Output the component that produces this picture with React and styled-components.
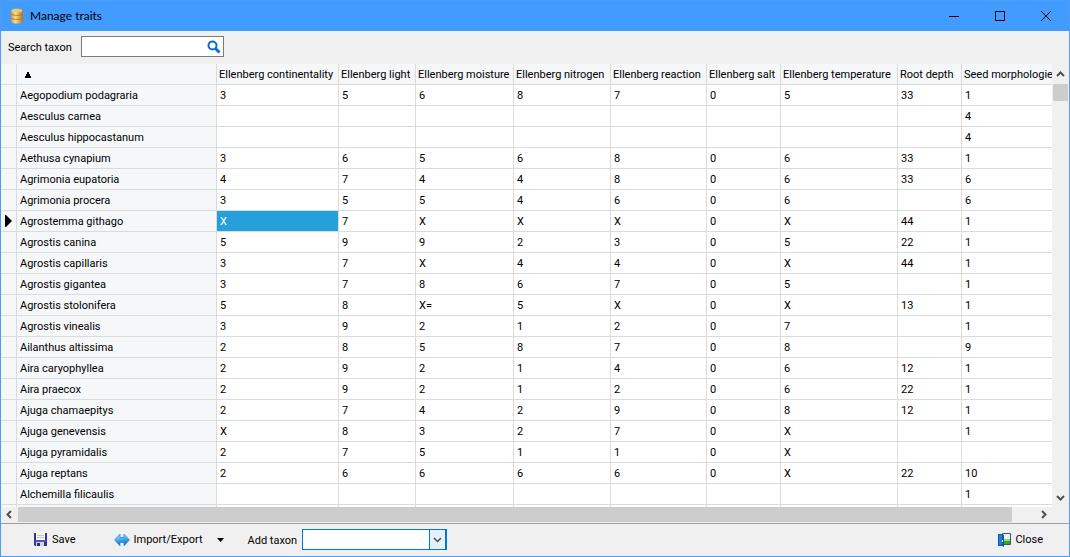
import styled, { createGlobalStyle } from "styled-components";

const GlobalStyle = createGlobalStyle`
  * {
    box-sizing: border-box;
  }

  body {
    margin: 0;
    background: #f0f0f0;
    color: #000;
    font: 11px/14px Roboto, "Liberation Sans", sans-serif;
  }

  button,
  input,
  select {
    font: inherit;
    color: inherit;
  }
`;

const Window = styled.div`
  display: flex;
  flex-direction: column;
  min-height: 100vh;
  border: 1px solid #4a9df8;
  border-top: 0;
`;

const TitleBar = styled.header`
  display: flex;
  align-items: center;
  height: 31px;
  padding-left: 8px;
  background: #429cff;
  border-top: 1px solid #4a9df8;
`;

const Title = styled.h1`
  flex: 1;
  margin: 0 0 0 5px;
  font: 12px/16px Lato, "Open Sans", sans-serif;
`;

const WindowButton = styled.button`
  display: grid;
  place-items: center;
  width: 46px;
  height: 30px;
  padding: 0;
  border: 0;
  background: none;
`;

const Toolbar = styled.div`
  display: flex;
  align-items: center;
  gap: 8px;
  height: 33px;
  padding: 0 0 2px 7px;
`;

const Label = styled.label`
  padding-top: 2px;
  white-space: nowrap;
`;

const SearchLabel = styled(Label)`
  width: 65px;
`;

const SearchBox = styled.div`
  display: flex;
  align-items: center;
  width: 143px;
  height: 21px;
  padding-right: 2px;
  border: 1px solid #7a7a7a;
  background: #fff;
`;

const SearchInput = styled.input`
  flex: 1;
  min-width: 0;
  padding: 0 3px;
  border: 0;
  outline: 0;
  background: none;
`;

const IconButton = styled.button`
  display: grid;
  place-items: center;
  padding: 0;
  border: 0;
  background: none;
`;

const GridArea = styled.main`
  flex: 1;
  display: grid;
  grid-template-columns: minmax(0, 1fr) 17px;
  grid-template-rows: 1fr 16px;
`;

const GridView = styled.div`
  overflow: hidden;
  background: #fff;
`;

const Table = styled.table`
  width: 100%;
  table-layout: fixed;
  border-collapse: separate;
  border-spacing: 0;
`;

const Column = styled.col`
  width: ${(props) => (props.$width ? `${props.$width}px` : "auto")};
`;

const cellBorder = "1px solid #d9dbdd";

const HeadCell = styled.th`
  height: 21px;
  padding: 2px 2px 0;
  overflow: hidden;
  border-right: ${cellBorder};
  border-bottom: ${cellBorder};
  background: #f5f7f9;
  font-weight: normal;
  text-align: left;
  white-space: nowrap;

  &:last-child {
    border-right: 0;
  }
`;

const RowHead = styled(HeadCell)`
  padding: 2px 3px 0;
`;

const Marker = styled.td`
  height: 21px;
  padding: 0 0 0 4px;
  border-right: ${cellBorder};
  border-bottom: ${cellBorder};
  background: #f5f7f9;

  svg {
    display: block;
  }
`;

const Cell = styled.td`
  height: 21px;
  padding: 2px 3px 0;
  border-right: ${cellBorder};
  border-bottom: ${cellBorder};
  background: ${(props) => (props.$selected ? "#26a0da" : "#fff")};
  color: ${(props) => (props.$selected ? "#fff" : "#000")};

  &:last-child {
    border-right: 0;
  }
`;

const EndCell = styled.td`
  height: 2px;
  padding: 0;
  border-right: ${cellBorder};
  background: ${(props) => (props.$fixed ? "#f5f7f9" : "#fff")};

  &:last-child {
    border-right: 0;
  }
`;

const SortButton = styled.button`
  display: block;
  padding: 0 6px;
  border: 0;
  background: none;

  svg {
    display: block;
  }
`;

const VerticalScroll = styled.div`
  display: flex;
  flex-direction: column;
  align-items: center;
  justify-content: space-between;
`;

const HorizontalScroll = styled.div`
  display: flex;
  align-items: center;
  height: 15px;
`;

const ScrollButton = styled.button`
  display: grid;
  place-items: center;
  flex: none;
  width: 17px;
  height: ${(props) => (props.$tall ? 20 : 15)}px;
  padding: 0;
  border: 0;
  background: none;
`;

const VerticalTrack = styled.div`
  flex: 1;
  width: 15px;
`;

const VerticalThumb = styled.div`
  height: 17px;
  background: #cdcdcd;
`;

const HorizontalTrack = styled.div`
  flex: 1;
  height: 15px;
`;

const HorizontalThumb = styled.div`
  width: calc(100% - 23px);
  height: 15px;
  background: #cdcdcd;
`;

const Footer = styled.footer`
  display: flex;
  align-items: center;
  height: 33px;
  padding: 0 26px 0 31px;
  border-top: 1px solid #a0a0a0;
`;

const FooterButton = styled.button`
  display: flex;
  align-items: center;
  gap: 4px;
  padding: 0;
  border: 0;
  background: none;
  white-space: nowrap;
`;

const ExportGroup = styled.div`
  display: flex;
  align-items: center;
  gap: 14px;
  margin-left: 38px;
`;

const AddTaxon = styled.div`
  display: flex;
  align-items: center;
  gap: 5px;
  flex: 1;
  margin-left: 24px;
  padding-bottom: 1px;
`;

const ComboBox = styled.div`
  display: grid;
  grid-template-columns: 1fr 17px;
  width: 145px;
  height: 21px;
  border: 1px solid #0078d7;
  background: #fff;
`;

const Select = styled.select`
  grid-area: 1 / 1 / 2 / 3;
  min-width: 0;
  padding: 0 20px 0 3px;
  border: 0;
  outline: 0;
  appearance: none;
  background: none;
`;

const ComboArrow = styled.span`
  grid-area: 1 / 2 / 2 / 3;
  display: grid;
  place-items: center;
  border: 1px solid #0078d7;
  border-width: 0 1px 0 1px;
  background: #e5f1fb;
  pointer-events: none;
`;

const columns = [
  { name: "Ellenberg continentality", width: 122 },
  { name: "Ellenberg light", width: 77 },
  { name: "Ellenberg moisture", width: 98 },
  { name: "Ellenberg nitrogen", width: 97 },
  { name: "Ellenberg reaction", width: 96 },
  { name: "Ellenberg salt", width: 74 },
  { name: "Ellenberg temperature", width: 117 },
  { name: "Root depth", width: 64 },
  { name: "Seed morphologie" },
];

const taxa = [
  ["Aegopodium podagraria", "3", "5", "6", "8", "7", "0", "5", "33", "1"],
  ["Aesculus carnea", "", "", "", "", "", "", "", "", "4"],
  ["Aesculus hippocastanum", "", "", "", "", "", "", "", "", "4"],
  ["Aethusa cynapium", "3", "6", "5", "6", "8", "0", "6", "33", "1"],
  ["Agrimonia eupatoria", "4", "7", "4", "4", "8", "0", "6", "33", "6"],
  ["Agrimonia procera", "3", "5", "5", "4", "6", "0", "6", "", "6"],
  ["Agrostemma githago", "X", "7", "X", "X", "X", "0", "X", "44", "1"],
  ["Agrostis canina", "5", "9", "9", "2", "3", "0", "5", "22", "1"],
  ["Agrostis capillaris", "3", "7", "X", "4", "4", "0", "X", "44", "1"],
  ["Agrostis gigantea", "3", "7", "8", "6", "7", "0", "5", "", "1"],
  ["Agrostis stolonifera", "5", "8", "X=", "5", "X", "0", "X", "13", "1"],
  ["Agrostis vinealis", "3", "9", "2", "1", "2", "0", "7", "", "1"],
  ["Ailanthus altissima", "2", "8", "5", "8", "7", "0", "8", "", "9"],
  ["Aira caryophyllea", "2", "9", "2", "1", "4", "0", "6", "12", "1"],
  ["Aira praecox", "2", "9", "2", "1", "2", "0", "6", "22", "1"],
  ["Ajuga chamaepitys", "2", "7", "4", "2", "9", "0", "8", "12", "1"],
  ["Ajuga genevensis", "X", "8", "3", "2", "7", "0", "X", "", "1"],
  ["Ajuga pyramidalis", "2", "7", "5", "1", "1", "0", "X", "", ""],
  ["Ajuga reptans", "2", "6", "6", "6", "6", "0", "X", "22", "10"],
  ["Alchemilla filicaulis", "", "", "", "", "", "", "", "", "1"],
];

const currentTaxon = "Agrostemma githago";

const chevrons = {
  up: "M1 6 4.5 2.5 8 6",
  down: "M1 3 4.5 6.5 8 3",
  left: "M6 1 2.5 4.5 6 8",
  right: "M3 1 6.5 4.5 3 8",
};

function Chevron({ direction, weight = 2 }) {
  return (
    <svg width="9" height="9" fill="none" stroke="#505050" strokeWidth={weight}>
      <path d={chevrons[direction]} />
    </svg>
  );
}

function DatabaseIcon() {
  return (
    <svg width="16" height="16" viewBox="0 0 16 16">
      <defs>
        <linearGradient id="gold">
          <stop offset="0" stopColor="#c99a3a" />
          <stop offset="0.35" stopColor="#f9e096" />
          <stop offset="0.65" stopColor="#e0b04a" />
          <stop offset="1" stopColor="#a87a2c" />
        </linearGradient>
      </defs>
      <path
        d="M2 2.5C2 0 14 0 14 2.5v11c0 2.7-12 2.7-12 0z"
        fill="url(#gold)"
      />
      <ellipse cx="8" cy="2.5" rx="5.4" ry="1.6" fill="#edcb74" />
      <path
        d="M2 6c1 1.8 11 1.8 12 0M2 10c1 1.8 11 1.8 12 0"
        fill="none"
        stroke="#98691c"
        strokeOpacity="0.7"
      />
    </svg>
  );
}

function SearchIcon() {
  return (
    <svg width="14" height="14" fill="none" stroke="#0f6ac9">
      <circle cx="5.5" cy="5.5" r="4" strokeWidth="2" />
      <path d="m8.5 8.5 4 4" strokeWidth="3" />
    </svg>
  );
}

function SaveIcon() {
  return (
    <svg width="16" height="16" viewBox="0 0 16 16">
      <path d="M2 1h13v13H3l-1-1z" fill="#34349f" />
      <path d="M4 1h9v7H4z" fill="#f6f6f6" />
      <path d="M5 3.5h7M5 5.5h7" stroke="#c8c8c8" />
      <path d="M3 8h11v2H3z" fill="#5252bb" />
      <path d="M4 10h8v4H4z" fill="#d4d4de" />
      <path d="M5 11h3v3H5z" fill="#2b2b86" />
    </svg>
  );
}

function ExchangeIcon() {
  return (
    <svg width="16" height="14" viewBox="0 0 16 14">
      <defs>
        <linearGradient id="sky" x2="0.2" y2="1">
          <stop offset="0" stopColor="#b0e6fb" />
          <stop offset="0.45" stopColor="#4db9f2" />
          <stop offset="1" stopColor="#0d66bd" />
        </linearGradient>
      </defs>
      <path
        d="M.6 7 6 1.2v3.3h4V1.2L15.4 7 10 12.8V9.5H6v3.3z"
        fill="url(#sky)"
        stroke="#2f87cf"
        strokeWidth="0.8"
      />
    </svg>
  );
}

function DoorIcon() {
  return (
    <svg width="14" height="14" viewBox="0 0 14 14">
      <path d="M5.5.5h8v11h-8z" fill="#e5f4ff" stroke="#43505f" />
      <path d="M6 7h7v4H6z" fill="#35a828" />
      <path d="M6 6h7v2H6z" fill="#9ad867" />
      <path d="M1 1h4l2 1v12l-2-1H1z" fill="#0a5cab" />
      <path d="M2 2h3v10H2z" fill="#2480d4" />
      <path d="M5 7h1v2H5z" fill="#fff" />
    </svg>
  );
}

function TraitRow({ taxon }) {
  const [name, ...values] = taxon;
  const current = name === currentTaxon;

  return (
    <tr>
      <Marker>
        {current && (
          <svg width="8" height="12">
            <path d="M0 0h1l6 6-6 6H0z" />
          </svg>
        )}
      </Marker>
      <RowHead scope="row">{name}</RowHead>
      {values.map((value, i) => (
        <Cell key={columns[i].name} $selected={current && i === 0}>
          {value}
        </Cell>
      ))}
    </tr>
  );
}

function TraitTable() {
  return (
    <Table>
      <colgroup>
        <Column $width={16} />
        <Column $width={200} />
        {columns.map((column) => (
          <Column key={column.name} $width={column.width} />
        ))}
      </colgroup>
      <thead>
        <tr>
          <HeadCell />
          <HeadCell scope="col">
            <SortButton aria-label="Sort by taxon">
              <svg width="6" height="6">
                <path d="M2 0h2v2h1v2h1v2H0V4h1V2h1z" />
              </svg>
            </SortButton>
          </HeadCell>
          {columns.map((column) => (
            <HeadCell key={column.name} scope="col">
              {column.name}
            </HeadCell>
          ))}
        </tr>
      </thead>
      <tbody>
        {taxa.map((taxon) => (
          <TraitRow key={taxon[0]} taxon={taxon} />
        ))}
        <tr aria-hidden="true">
          <EndCell $fixed />
          <EndCell $fixed />
          {columns.map((column) => (
            <EndCell key={column.name} />
          ))}
        </tr>
      </tbody>
    </Table>
  );
}

export default function App() {
  return (
    <Window>
      <GlobalStyle />
      <TitleBar>
        <DatabaseIcon />
        <Title>Manage traits</Title>
        <WindowButton aria-label="Minimize">
          <svg width="10" height="11">
            <path d="M0 5h10v1H0z" />
          </svg>
        </WindowButton>
        <WindowButton aria-label="Maximize">
          <svg width="10" height="10" fill="none" stroke="#000">
            <path d="M.5.5h9v9h-9z" />
          </svg>
        </WindowButton>
        <WindowButton aria-label="Close window">
          <svg width="10" height="10" fill="none" stroke="#000">
            <path d="m0 0 10 10m0-10L0 10" />
          </svg>
        </WindowButton>
      </TitleBar>

      <Toolbar>
        <SearchLabel htmlFor="search">Search taxon</SearchLabel>
        <SearchBox>
          <SearchInput id="search" type="text" />
          <IconButton aria-label="Search">
            <SearchIcon />
          </IconButton>
        </SearchBox>
      </Toolbar>

      <GridArea>
        <GridView>
          <TraitTable />
        </GridView>
        <VerticalScroll>
          <ScrollButton $tall aria-label="Scroll up">
            <Chevron direction="up" />
          </ScrollButton>
          <VerticalTrack>
            <VerticalThumb />
          </VerticalTrack>
          <ScrollButton $tall aria-label="Scroll down">
            <Chevron direction="down" />
          </ScrollButton>
        </VerticalScroll>
        <HorizontalScroll>
          <ScrollButton aria-label="Scroll left">
            <Chevron direction="left" />
          </ScrollButton>
          <HorizontalTrack>
            <HorizontalThumb />
          </HorizontalTrack>
          <ScrollButton aria-label="Scroll right">
            <Chevron direction="right" />
          </ScrollButton>
        </HorizontalScroll>
      </GridArea>

      <Footer>
        <FooterButton>
          <SaveIcon />
          Save
        </FooterButton>
        <ExportGroup>
          <FooterButton>
            <ExchangeIcon />
            Import/Export
          </FooterButton>
          <IconButton aria-label="More import and export options">
            <svg width="7" height="4">
              <path d="M0 0h7L3.5 4z" />
            </svg>
          </IconButton>
        </ExportGroup>
        <AddTaxon>
          <Label htmlFor="add-taxon">Add taxon</Label>
          <ComboBox>
            <Select id="add-taxon" defaultValue="">
              <option value="" />
              {taxa.map(([name]) => (
                <option key={name}>{name}</option>
              ))}
            </Select>
            <ComboArrow>
              <Chevron direction="down" weight={1.5} />
            </ComboArrow>
          </ComboBox>
        </AddTaxon>
        <FooterButton>
          <DoorIcon />
          Close
        </FooterButton>
      </Footer>
    </Window>
  );
}
